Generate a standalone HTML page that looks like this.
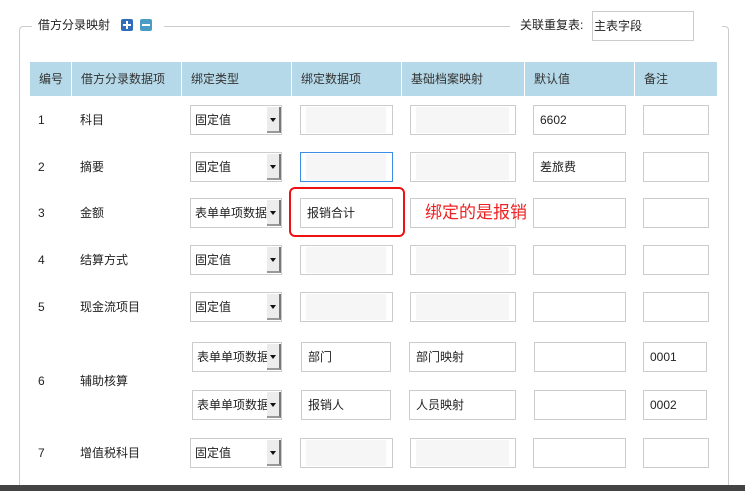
<!DOCTYPE html>
<html><head><meta charset="utf-8"><style>
html,body{margin:0;width:745px;height:491px;overflow:hidden}
body{background:#fff;position:relative;font-family:"Liberation Sans","Noto Sans CJK SC",sans-serif;font-size:12px;color:#222}
.a{position:absolute}
.fs{left:19px;top:26px;width:708px;height:470px;border:1px solid #ccc;border-radius:4px;border-bottom:none}
.hd{top:62px;height:34px;background:#b5d9e8;line-height:34px;padding-left:9px;box-sizing:border-box;color:#333}
.t{line-height:16px}
.sel{width:92px;height:30px;border:1px solid #ccc;box-sizing:border-box;background:#fff;line-height:28px;padding-left:4px;font-size:12px}
.sel i{position:absolute;right:0;top:1px;width:14px;height:26px;background:#ececec;border-right:2px solid #777;border-bottom:2px solid #999;box-sizing:border-box}
.sel i:after{content:"";position:absolute;left:3px;top:11px;border:3px solid transparent;border-top:4px solid #111}
.in{height:30px;border:1px solid #ccc;box-sizing:border-box;background:#fff;line-height:28px;padding-left:6px}
.dis:after{content:"";position:absolute;left:5px;right:6px;top:1px;bottom:1px;background:#f6f6f6}
</style></head><body>
<div class="a fs"></div>
<div class="a" style="left:32px;top:16px;background:#fff;padding:0 6px;height:20px;width:120px;line-height:18px;font-size:12px">借方分录映射
<span class="a" style="left:89px;top:3px;width:12px;height:12px;background:#2f6db8;border-radius:2px"><span class="a" style="left:2px;top:5px;width:8px;height:2px;background:#fff"></span><span class="a" style="left:5px;top:2px;width:2px;height:8px;background:#fff"></span></span>
<span class="a" style="left:108px;top:3px;width:12px;height:12px;background:#4a9cc4;border-radius:2px"><span class="a" style="left:2px;top:5px;width:8px;height:2px;background:#fff"></span></span></div>
<div class="a" style="left:510px;top:16px;width:212px;height:30px;background:#fff"></div>
<div class="a t" style="left:520px;top:17px">关联重复表:</div>
<div class="a in" style="left:592px;top:11px;width:102px;height:30px;line-height:28px;padding-left:1px">主表字段</div>

<div class="a hd" style="left:30px;width:41px">编号</div>
<div class="a hd" style="left:72px;width:109px">借方分录数据项</div>
<div class="a hd" style="left:182px;width:109px">绑定类型</div>
<div class="a hd" style="left:292px;width:109px">绑定数据项</div>
<div class="a hd" style="left:402px;width:122px">基础档案映射</div>
<div class="a hd" style="left:525px;width:109px">默认值</div>
<div class="a hd" style="left:635px;width:82px">备注</div>

<div class="a t" style="left:38px;top:112px">1</div><div class="a t" style="left:80px;top:112px">科目</div>
<div class="a sel" style="left:190px;top:105px">固定值<i></i></div>
<div class="a in dis" style="left:300px;top:105px;width:93px"></div>
<div class="a in dis" style="left:410px;top:105px;width:106px"></div>
<div class="a in" style="left:533px;top:105px;width:93px">6602</div>
<div class="a in" style="left:643px;top:105px;width:66px"></div>

<div class="a t" style="left:38px;top:159px">2</div><div class="a t" style="left:80px;top:159px">摘要</div>
<div class="a sel" style="left:190px;top:152px">固定值<i></i></div>
<div class="a in dis" style="left:300px;top:152px;width:93px;border-color:#3a8ee6"></div>
<div class="a in dis" style="left:410px;top:152px;width:106px"></div>
<div class="a in" style="left:533px;top:152px;width:93px">差旅费</div>
<div class="a in" style="left:643px;top:152px;width:66px"></div>

<div class="a t" style="left:38px;top:205px">3</div><div class="a t" style="left:80px;top:205px">金额</div>
<div class="a sel" style="left:190px;top:198px">表单单项数据<i></i></div>
<div class="a in" style="left:300px;top:198px;width:93px">报销合计</div>
<div class="a in" style="left:410px;top:198px;width:106px"></div>
<div class="a in" style="left:533px;top:198px;width:93px"></div>
<div class="a in" style="left:643px;top:198px;width:66px"></div>
<div class="a" style="left:289px;top:187px;width:116px;height:50px;border:2px solid #ee1111;border-radius:6px;box-sizing:border-box"></div>
<div class="a" style="left:425px;top:202px;font-size:17px;line-height:22px;color:#ee2222">绑定的是报销</div>

<div class="a t" style="left:38px;top:252px">4</div><div class="a t" style="left:80px;top:252px">结算方式</div>
<div class="a sel" style="left:190px;top:245px">固定值<i></i></div>
<div class="a in dis" style="left:300px;top:245px;width:93px"></div>
<div class="a in dis" style="left:410px;top:245px;width:106px"></div>
<div class="a in" style="left:533px;top:245px;width:93px"></div>
<div class="a in" style="left:643px;top:245px;width:66px"></div>

<div class="a t" style="left:38px;top:299px">5</div><div class="a t" style="left:80px;top:299px">现金流项目</div>
<div class="a sel" style="left:190px;top:292px">固定值<i></i></div>
<div class="a in dis" style="left:300px;top:292px;width:93px"></div>
<div class="a in dis" style="left:410px;top:292px;width:106px"></div>
<div class="a in" style="left:533px;top:292px;width:93px"></div>
<div class="a in" style="left:643px;top:292px;width:66px"></div>

<div class="a t" style="left:38px;top:373px">6</div><div class="a t" style="left:80px;top:373px">辅助核算</div>
<div class="a sel" style="left:192px;top:342px;width:90px">表单单项数据<i></i></div>
<div class="a in" style="left:301px;top:342px;width:90px">部门</div>
<div class="a in" style="left:409px;top:342px;width:107px">部门映射</div>
<div class="a in" style="left:534px;top:342px;width:92px"></div>
<div class="a in" style="left:643px;top:342px;width:64px">0001</div>
<div class="a sel" style="left:192px;top:390px;width:90px">表单单项数据<i></i></div>
<div class="a in" style="left:301px;top:390px;width:90px">报销人</div>
<div class="a in" style="left:409px;top:390px;width:107px">人员映射</div>
<div class="a in" style="left:534px;top:390px;width:92px"></div>
<div class="a in" style="left:643px;top:390px;width:64px">0002</div>

<div class="a t" style="left:38px;top:445px">7</div><div class="a t" style="left:80px;top:445px">增值税科目</div>
<div class="a sel" style="left:190px;top:438px">固定值<i></i></div>
<div class="a in dis" style="left:300px;top:438px;width:93px"></div>
<div class="a in dis" style="left:410px;top:438px;width:106px"></div>
<div class="a in" style="left:533px;top:438px;width:93px"></div>
<div class="a in" style="left:643px;top:438px;width:66px"></div>

<div class="a" style="left:0;top:485px;width:745px;height:6px;background:#444"></div>
</body></html>
